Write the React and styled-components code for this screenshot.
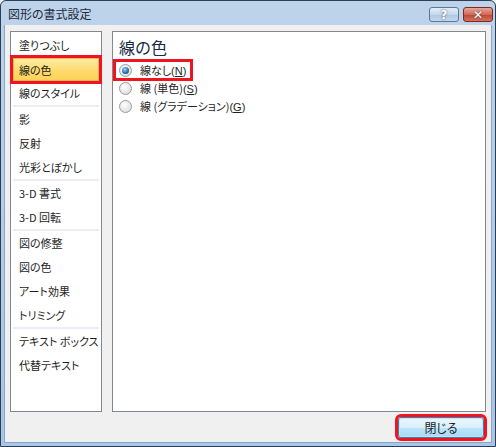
import styled, { createGlobalStyle } from 'styled-components';

const Global = createGlobalStyle`
html, body {
  margin: 0;
  width: 496px;
  height: 447px;
  overflow: hidden;
  background: #f0f0f0;
}
* { box-sizing: border-box; }
`

const Window = styled.div`
width: 496px;
height: 447px;
border: 1px solid #2c3e55;
border-radius: 6px 6px 0 0;
background: linear-gradient(#bdd3ea, #a9c6e6);
display: flex;
flex-direction: column;
font-family: "Noto Sans CJK JP", sans-serif;
font-feature-settings: "palt";
text-autospace: no-autospace;
color: #1e1e1e;
`

const TitleBar = styled.div`
height: 24px;
display: flex;
align-items: flex-start;
padding: 6px 2px 0 7px;
`

const Title = styled.div`
flex: 1;
font-size: 12px;
line-height: 14px;
color: #1d2a3a;
`

const CaptionButton = styled.div`
width: 30px;
height: 15px;
border: 1px solid ${p => p.close ? '#7a2b22' : '#5d7694'};
border-radius: 3px;
background: ${p => p.close
  ? 'linear-gradient(#e7a79b, #d06a58 50%, #c0452f 51%, #d3735f)'
  : 'linear-gradient(#e4edf7, #c6d8ec 50%, #aec7e3 51%, #c2d6ee)'};
display: flex;
align-items: center;
justify-content: center;
color: white;
font-family: "DejaVu Sans", sans-serif;
font-weight: bold;
font-size: 12px;
line-height: 1;
text-shadow: 0 0 2px #30405a;
& + & { margin-left: 4px; }
`

const Client = styled.div`
flex: 1;
margin: 0 3px 3px 3px;
background: #f0f0f0;
padding: 6px 5px 0 5px;
display: flex;
flex-direction: column;
border: 1px solid #8ba6c4;
border-top: none;
`

const Body = styled.div`
height: 381px;
display: flex;
gap: 10px;
`

const NavList = styled.div`
width: 92px;
border: 1px solid #828790;
background: white;
padding-top: 1px;
display: flex;
flex-direction: column;
`

const NavItem = styled.div`
height: ${p => p.selected ? 23 : 24}px;
margin: ${p => p.selected ? '1px 2px 0' : '0 2px'};
padding-left: ${p => p.selected ? 5 : 6}px;
display: flex;
align-items: center;
font-size: 11px;
white-space: nowrap;
border: ${p => p.selected ? '1px solid #e5b95a' : 'none'};
background: ${p => p.selected ? 'linear-gradient(#fdeca4, #fcd969 60%, #fbd35a)' : 'transparent'};
outline: ${p => p.selected ? '3px solid #f0141e' : 'none'};
outline-offset: 0;
`

const Separator = styled.div`
height: 2px;
margin: 0 2px;
background: #eceef3;
`

const Content = styled.div`
flex: 1;
border: 1px solid #828790;
background: white;
padding: 3px 0 0 6px;
`

const Heading = styled.div`
font-size: 16px;
font-feature-settings: normal;
color: #172a44;
height: 24px;
line-height: 24px;
`

const Options = styled.div`
display: flex;
flex-direction: column;
align-items: flex-start;
margin: 2px 0 0 -4px;
`

const Option = styled.label`
display: inline-flex;
align-items: center;
height: 18px;
padding: 0 5px 0 4px;
font-size: 11px;
gap: 8px;
outline: ${p => p.marked ? '3px solid #f0141e' : 'none'};
outline-offset: -1px;
`

const Radio = styled.span`
width: 13px;
height: 13px;
flex: none;
border-radius: 50%;
border: 1px solid #9a9a9a;
background: radial-gradient(circle at 40% 35%, #ffffff, #e2e2e2 70%, #d0d0d0);
display: flex;
align-items: center;
justify-content: center;
&::after {
  content: "";
  display: ${p => p.checked ? 'block' : 'none'};
  width: 7px;
  height: 7px;
  border-radius: 50%;
  background: radial-gradient(circle at 40% 35%, #9fd6f7, #1f6aa6 60%, #0c3f6e);
}
`

const Mnemonic = styled.span`
font-family: "Liberation Sans", sans-serif;
`

const Key = styled.span`
text-decoration: underline;
`

const Footer = styled.div`
flex: 1;
display: flex;
justify-content: flex-end;
align-items: flex-start;
padding: 5px 2px 0 0;
`

const Button = styled.button`
width: 86px;
height: 21px;
border: 1px solid #3c7fb1;
border-radius: 3px;
background: linear-gradient(#eaf6fd, #d9f0fc 50%, #bee6fd 51%, #a7d9f5);
box-shadow: inset 0 0 0 1px #c4e5f6;
font-family: "Noto Sans CJK JP", sans-serif;
font-feature-settings: "palt";
font-size: 12px;
color: #1e1e1e;
padding: 0;
outline: 3px solid #f0141e;
outline-offset: 0;
`

const groups = [
  ['塗りつぶし', '線の色', '線のスタイル'],
  ['影', '反射', '光彩とぼかし'],
  ['3-D 書式', '3-D 回転'],
  ['図の修整', '図の色', 'アート効果', 'トリミング'],
  ['テキスト ボックス', '代替テキスト'],
];

const options = [
  { label: '線なし', key: 'N', checked: true },
  { label: '線 (単色)', key: 'S' },
  { label: '線 (グラデーション)', key: 'G' },
];

const App = () => {
  return (
    <>
      <Global />
      <Window>
        <TitleBar>
          <Title>図形の書式設定</Title>
          <CaptionButton>?</CaptionButton>
          <CaptionButton close>✕</CaptionButton>
        </TitleBar>
        <Client>
          <Body>
            <NavList>
              {groups.map((g, i) => (
                <div key={i}>
                  {i > 0 && <Separator />}
                  {g.map(name => (
                    <NavItem key={name} selected={name === '線の色'}>{name}</NavItem>
                  ))}
                </div>
              ))}
            </NavList>
            <Content>
              <Heading>線の色</Heading>
              <Options>
                {options.map(o => (
                  <Option key={o.key} marked={o.checked}>
                    <Radio checked={o.checked} />
                    <span>{o.label}<Mnemonic>(<Key>{o.key}</Key>)</Mnemonic></span>
                  </Option>
                ))}
              </Options>
            </Content>
          </Body>
          <Footer>
            <Button>閉じる</Button>
          </Footer>
        </Client>
      </Window>
    </>
  );
}
export default App;
